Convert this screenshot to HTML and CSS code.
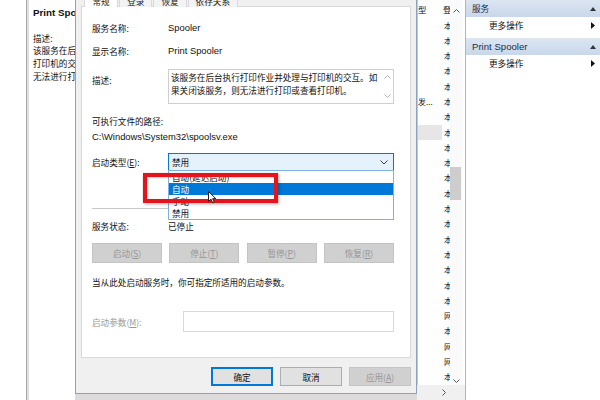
FILE: index.html
```html
<!DOCTYPE html>
<html lang="zh-CN">
<head>
<meta charset="utf-8">
<title>Print Spooler 的属性</title>
<link rel="stylesheet" href="styles.css">
</head>
<body>
<div class="screen">
  <div class="edge"></div>

  <aside class="detail">
    <div class="detail-title lat">Print Spooler</div>
    <p class="detail-label">描述:</p>
    <p>该服务在后台执行打印作业并处理与</p>
    <p>打印机的交互。如果关闭该服务，则</p>
    <p>无法进行打印或查看打印机。</p>
  </aside>

  <div class="dialog-area">
    <section class="dialog">
      <nav class="tabs">
        <span class="tab active">常规</span>
        <span class="tab">登录</span>
        <span class="tab">恢复</span>
        <span class="tab">依存关系</span>
      </nav>

      <div class="panel">
        <div class="row r-name"><span class="label">服务名称:</span><span class="lat">Spooler</span></div>
        <div class="row r-display"><span class="label">显示名称:</span><span class="lat">Print Spooler</span></div>
        <div class="row r-desc">
          <span class="label">描述:</span>
          <div class="textbox">
            <p>该服务在后台执行打印作业并处理与打印机的交互。如</p>
            <p>果关闭该服务，则无法进行打印或查看打印机。</p>
            <div class="tb-scroll">
              <svg width="7" height="4" viewBox="0 0 7 4"><path d="M0.5 3.5 L3.5 0.5 L6.5 3.5" fill="none" stroke="#b4b4b4"/></svg>
              <svg width="7" height="4" viewBox="0 0 7 4"><path d="M0.5 0.5 L3.5 3.5 L6.5 0.5" fill="none" stroke="#b4b4b4"/></svg>
            </div>
          </div>
        </div>
        <div class="r-path-label">可执行文件的路径:</div>
        <div class="r-path lat">C:\Windows\System32\spoolsv.exe</div>

        <div class="row r-startup">
          <span class="label">启动类型(<u>E</u>):</span>
          <div class="combo">
            <span>禁用</span>
            <svg width="8" height="5" viewBox="0 0 8 5"><path d="M0.5 0.5 L4 4 L7.5 0.5" fill="none" stroke="#404040"/></svg>
            <ul class="combo-list">
              <li>自动(延迟启动)</li>
              <li class="sel">自动</li>
              <li>手动</li>
              <li>禁用</li>
            </ul>
          </div>
          <div class="mark"></div>
          <svg class="cursor" width="9" height="13" viewBox="0 0 9 13"><path d="M0.5 0.5 V10.5 L3 8.2 L4.7 12 L6.3 11.3 L4.6 7.6 H7.8 Z" fill="#fff" stroke="#222" stroke-linejoin="round"/></svg>
        </div>

        <hr class="sep">

        <div class="row r-status"><span class="label">服务状态:</span><span>已停止</span></div>
        <div class="svc-buttons">
          <button disabled>启动(<u>S</u>)</button>
          <button disabled>停止(<u>T</u>)</button>
          <button disabled>暂停(<u>P</u>)</button>
          <button disabled>恢复(<u>R</u>)</button>
        </div>
        <p class="hint">当从此处启动服务时，你可指定所适用的启动参数。</p>
        <div class="row r-params">
          <span class="label wide dim">启动参数(<u>M</u>):</span>
          <div class="input"></div>
        </div>
      </div>

      <footer class="dialog-foot">
        <button class="primary">确定</button>
        <button>取消</button>
        <button disabled>应用(<u>A</u>)</button>
      </footer>
    </section>
  </div>

  <div class="list">
    <div class="list-main">
      <div class="cols">
        <div class="lrow head"><span class="c-type">型</span><span class="c-login">登</span></div>
        <div class="lrow"><span class="c-type"></span><span class="c-login">本</span></div>
        <div class="lrow"><span class="c-type"></span><span class="c-login">本</span></div>
        <div class="lrow"><span class="c-type"></span><span class="c-login">本</span></div>
        <div class="lrow"><span class="c-type"></span><span class="c-login">本</span></div>
        <div class="lrow"><span class="c-type"></span><span class="c-login">本</span></div>
        <div class="lrow"><span class="c-type">发...</span><span class="c-login">本</span></div>
        <div class="lrow"><span class="c-type"></span><span class="c-login">本</span></div>
        <div class="lrow picked"><span class="c-type"></span><span class="c-login">本</span></div>
        <div class="lrow"><span class="c-type"></span><span class="c-login">本</span></div>
        <div class="lrow"><span class="c-type"></span><span class="c-login">本</span></div>
        <div class="lrow"><span class="c-type"></span><span class="c-login">本</span></div>
        <div class="lrow"><span class="c-type"></span><span class="c-login">本</span></div>
        <div class="lrow"><span class="c-type"></span><span class="c-login">本</span></div>
        <div class="lrow"><span class="c-type"></span><span class="c-login">本</span></div>
        <div class="lrow"><span class="c-type"></span><span class="c-login">本</span></div>
        <div class="lrow"><span class="c-type"></span><span class="c-login">本</span></div>
        <div class="lrow"><span class="c-type"></span><span class="c-login">本</span></div>
        <div class="lrow"><span class="c-type"></span><span class="c-login">本</span></div>
        <div class="lrow"><span class="c-type"></span><span class="c-login">本</span></div>
        <div class="lrow"><span class="c-type"></span><span class="c-login">网</span></div>
        <div class="lrow"><span class="c-type"></span><span class="c-login">本</span></div>
        <div class="lrow"><span class="c-type"></span><span class="c-login">网</span></div>
        <div class="lrow"><span class="c-type"></span><span class="c-login">网</span></div>
        <div class="lrow"><span class="c-type"></span><span class="c-login">本</span></div>
      </div>
      <div class="vscroll">
        <svg class="arrow" width="7" height="4" viewBox="0 0 7 4"><path d="M0.5 3.5 L3.5 0.5 L6.5 3.5" fill="none" stroke="#555"/></svg>
        <div class="track"><div class="thumb"></div></div>
        <svg class="arrow" width="7" height="4" viewBox="0 0 7 4"><path d="M0.5 0.5 L3.5 3.5 L6.5 0.5" fill="none" stroke="#555"/></svg>
      </div>
    </div>
    <div class="hscroll">
      <svg width="4" height="7" viewBox="0 0 4 7"><path d="M0.5 0.5 L3.5 3.5 L0.5 6.5" fill="none" stroke="#555"/></svg>
    </div>
  </div>

  <aside class="actions">
    <div class="act-head"><span>服务</span><svg width="6" height="4" viewBox="0 0 6 4"><path d="M0 4 L3 0 L6 4 Z" fill="#333"/></svg></div>
    <div class="act-item"><span>更多操作</span><svg width="4" height="7" viewBox="0 0 4 7"><path d="M0 0 L4 3.5 L0 7 Z" fill="#111"/></svg></div>
    <div class="act-head"><span class="lat">Print Spooler</span><svg width="6" height="4" viewBox="0 0 6 4"><path d="M0 4 L3 0 L6 4 Z" fill="#333"/></svg></div>
    <div class="act-item"><span>更多操作</span><svg width="4" height="7" viewBox="0 0 4 7"><path d="M0 0 L4 3.5 L0 7 Z" fill="#111"/></svg></div>
  </aside>
</div>
</body>
</html>
```

FILE: styles.css
```css
* {
  box-sizing: border-box;
  margin: 0;
  padding: 0;
}

html,
body {
  width: 600px;
  height: 400px;
  overflow: hidden;
  background: #fff;
}

body {
  font-family: "Noto Sans CJK SC", "Liberation Sans", sans-serif;
  font-size: 8.6px;
  color: #111;
}

.lat {
  font-family: "Liberation Sans", "Noto Sans CJK SC", sans-serif;
  font-size: 9.4px;
}

u {
  text-decoration: underline;
  text-underline-offset: 1px;
}

.screen {
  display: flex;
  width: 600px;
  height: 400px;
}

/* window edge on the far left */
.edge {
  width: 29px;
  flex: none;
  background: linear-gradient(to right, #fff 0 26px, #a9a9a9 26px 27px, #dedede 27px 29px);
}

/* service description pane */
.detail {
  width: 46px;
  flex: none;
  overflow: hidden;
  white-space: nowrap;
  padding: 7px 0 0 4px;
}

.detail-title {
  font-weight: bold;
  font-size: 9.8px;
  line-height: 12px;
  height: 12px;
}

.detail p {
  line-height: 12.8px;
}

.detail .detail-label {
  margin-top: 12.6px;
}

/* properties dialog */
.dialog-area {
  width: 342px;
  flex: none;
  background: #dcdcdc;
}

.dialog {
  height: 394px;
  display: flex;
  flex-direction: column;
  background: #f0f0f0;
  border: 1px solid #8da2bd;
  border-top: none;
  padding: 0 5px;
}

.tabs {
  height: 7px;
  overflow: hidden;
  display: flex;
  align-items: flex-end;
  padding-left: 3px;
  position: relative;
  z-index: 1;
}

.tab {
  height: 13px;
  line-height: 12px;
  padding: 0 7px;
  white-space: nowrap;
  flex: none;
  border: 1px solid #d9d9d9;
  border-bottom: none;
  background: #f3f3f3;
  margin-right: 1px;
  color: #222;
}

.tab.active {
  background: #fff;
  padding: 0 7.5px;
}

.panel {
  height: 352px;
  margin-top: -1px;
  flex: none;
  background: #fff;
  border: 1px solid #d9d9d9;
  padding: 14px 16px 0 10px;
  position: relative;
}

.row {
  display: flex;
  align-items: center;
}

.label {
  width: 76px;
  flex: none;
}

.label.wide {
  width: 91px;
}

.dim {
  color: #9a9a9a;
}

.r-name,
.r-display,
.r-path-label,
.r-path,
.r-status,
.hint {
  height: 14px;
  line-height: 14px;
  white-space: nowrap;
}

.r-display {
  margin-top: 9px;
}

.r-desc {
  margin-top: 11px;
  height: 35px;
  align-items: flex-start;
}

.r-desc .label {
  padding-top: 4px;
  line-height: 14px;
}

.textbox {
  width: 226px;
  height: 35px;
  border: 1px solid #cfcfcf;
  padding: 1px 12px 0 2px;
  line-height: 13px;
  position: relative;
  white-space: nowrap;
}

.tb-scroll {
  position: absolute;
  top: 0;
  right: 0;
  bottom: 0;
  width: 11px;
  display: flex;
  flex-direction: column;
  justify-content: space-between;
  align-items: center;
  padding: 5px 0 5px;
}

.tb-scroll svg {
  display: block;
}

.r-path-label {
  margin-top: 10px;
}

.r-path {
  margin-top: 2px;
}

.r-startup {
  margin-top: 9px;
  height: 18px;
  position: relative;
}

.combo {
  width: 226px;
  height: 18px;
  border: 1px solid #0078d7;
  background: #e5f1fb;
  display: flex;
  align-items: center;
  justify-content: space-between;
  padding: 0 5px 0 3px;
  position: relative;
}

.combo svg {
  display: block;
}

.combo-list {
  position: absolute;
  top: 16px;
  left: -1px;
  width: 226px;
  list-style: none;
  background: #fff;
  border: 1px solid #7eb0e2;
  z-index: 1;
}

.combo-list li {
  height: 12px;
  line-height: 12px;
  padding-left: 3px;
}

.combo-list li.sel {
  background: #0078d7;
  color: #fff;
}

.mark {
  position: absolute;
  left: 51px;
  top: 20px;
  width: 135px;
  height: 30px;
  border: 4px solid #e3141b;
  box-shadow: 1px 1px 3px rgba(0, 0, 0, 0.35), inset 1px 1px 2px rgba(0, 0, 0, 0.2);
  z-index: 2;
}

.cursor {
  position: absolute;
  left: 116px;
  top: 38px;
  z-index: 3;
}

.sep {
  margin-top: 37px;
  border: 0;
  border-top: 1px solid #c8c8c8;
  height: 0;
}

.r-status {
  margin-top: 10px;
}

.svc-buttons {
  margin-top: 10px;
  display: flex;
  justify-content: space-between;
}

button {
  font: inherit;
  height: 20px;
  width: 70px;
  background: #e1e1e1;
  border: 1px solid #adadad;
  color: #111;
}

button:disabled {
  background: #d0d0d0;
  border-color: #c4c4c4;
  color: #969696;
}

.hint {
  margin-top: 12px;
}

.r-params {
  margin-top: 22px;
  height: 21px;
}

.input {
  width: 211px;
  height: 21px;
  border: 1px solid #d9d9d9;
  background: #fff;
}

.dialog-foot {
  height: 35px;
  padding-top: 9px;
  display: flex;
  justify-content: flex-end;
  gap: 7px;
}

.dialog-foot button {
  width: 62px;
  height: 19px;
}

.dialog-foot .primary {
  border: 1px solid #0078d7;
  box-shadow: inset 0 0 0 1px #0078d7;
}

/* services list behind the dialog */
.list {
  width: 49px;
  flex: none;
  border-right: 1px solid #b5b5b5;
  display: flex;
  flex-direction: column;
}

.list-main {
  height: 385px;
  display: flex;
}

.cols {
  width: 33px;
  flex: none;
  overflow: hidden;
  border-left: 1px solid #b7cbe3;
}

.lrow {
  display: flex;
  height: 15.3px;
  line-height: 15.3px;
  font-size: 8px;
  white-space: nowrap;
}

.lrow.head {
  height: 17.5px;
  line-height: 19px;
  font-size: 8.4px;
}

.c-type {
  width: 24px;
  flex: none;
  overflow: hidden;
}

.c-login {
  width: 9px;
  flex: none;
  overflow: hidden;
  padding-left: 2px;
}

.lrow.head .c-login {
  padding-left: 1px;
}

.lrow.picked .c-type {
  background: #e6e6e6;
}

.vscroll {
  width: 13px;
  flex: none;
  display: flex;
  flex-direction: column;
  align-items: center;
  background: #fafafa;
}

.vscroll .arrow {
  display: block;
  margin: 9px 0 0;
}

.vscroll .arrow:last-child {
  margin: 0 0 2px;
}

.track {
  flex: 1;
  width: 100%;
  padding: 154px 2px 0 0;
}

.thumb {
  height: 33px;
  background: #cdcdcd;
}

.hscroll {
  height: 15px;
  background: #f0f0f0;
  display: flex;
  align-items: center;
  padding-left: 25px;
}

/* action pane on the right */
.actions {
  flex: 1;
  overflow: hidden;
}

.act-head {
  height: 17px;
  line-height: 17px;
  padding: 0 4px 0 6px;
  background: linear-gradient(#dce6f2, #c8d7ea);
  display: flex;
  justify-content: space-between;
  align-items: center;
  color: #1f2f47;
}

.act-head .lat {
  font-size: 9.6px;
}

.act-item {
  height: 21px;
  line-height: 17px;
  padding: 0 5px 0 23px;
  display: flex;
  justify-content: space-between;
  align-items: flex-start;
}

.act-item svg {
  margin-top: 5px;
}
```
